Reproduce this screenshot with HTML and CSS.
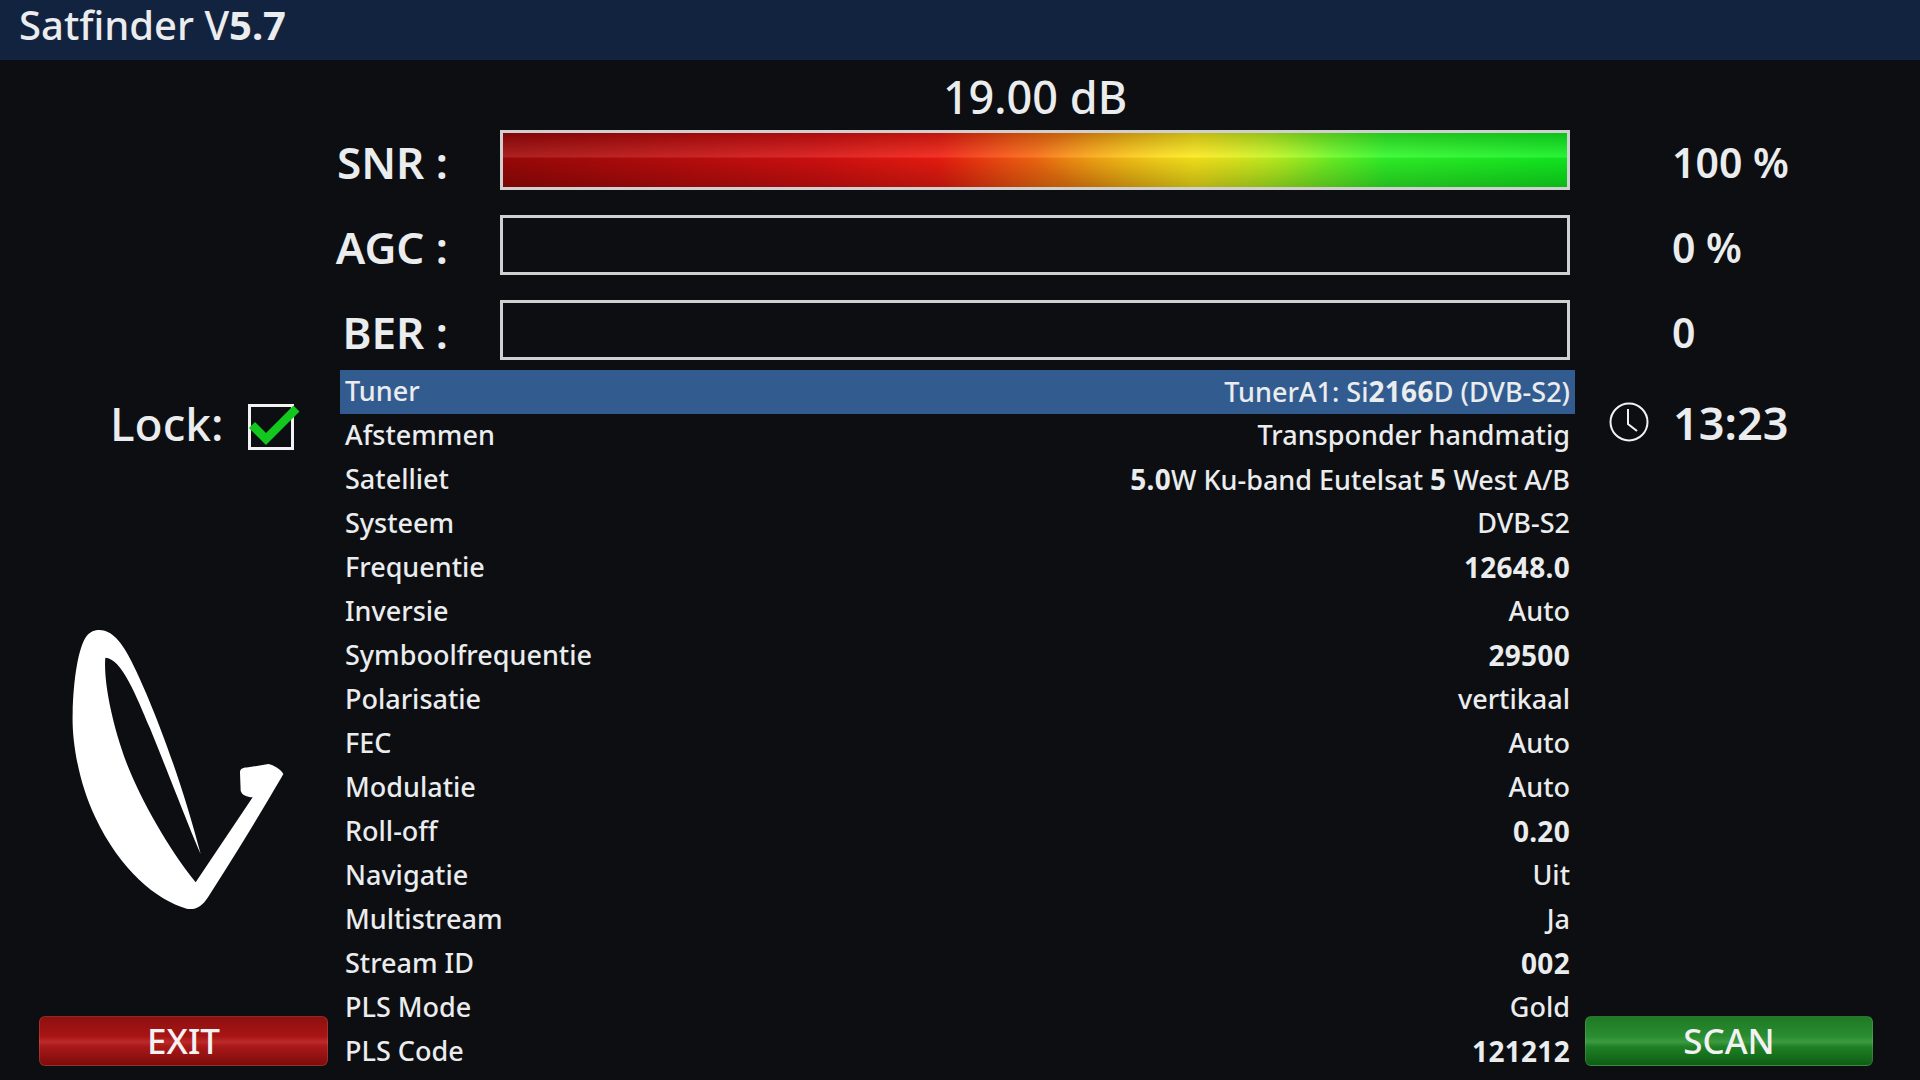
FILE: index.html
```html
<!DOCTYPE html>
<html lang="nl">
<head>
<meta charset="utf-8">
<title>Satfinder</title>
<link rel="stylesheet" href="styles.css">
</head>
<body>
<header class="titlebar">Satfinder V<b class="num">5.7</b></header>
<div class="db">19.00 dB</div>
<section class="meters">
  <div class="meter-label">SNR :</div><div class="bar bar-full"></div><div class="meter-value">100 %</div>
  <div class="meter-label">AGC :</div><div class="bar"></div><div class="meter-value">0 %</div>
  <div class="meter-label">BER :</div><div class="bar"></div><div class="meter-value">0</div>
</section>
<main class="lower">
  <aside class="left">
    <div class="lock">
      <span class="lock-text">Lock:</span>
      <svg class="check" viewBox="0 0 52 46" width="52" height="46"><rect x="1.5" y="1.5" width="43" height="43" fill="none" stroke="#f2f2f2" stroke-width="3"/><path d="M4 21 L18 35 L48.5 4.5" fill="none" stroke="#12c81e" stroke-width="8.5"/></svg>
    </div>
    <svg class="dish" viewBox="0 0 840 1020" width="280" height="340"><path fill="#fff" fill-rule="evenodd" d="M178 90 C215 90 245 125 275 185 C335 305 420 525 482 762 C450 690 385 520 330 385 C290 290 245 175 196 173 C190 240 215 370 260 490 C305 605 385 745 467 847 L638 592 C620 590 606 586 602 572 L600 518 C600 505 610 503 625 502 L685 492 C700 494 725 510 730 522 C680 610 570 790 505 890 C485 922 465 930 440 926 C350 900 240 810 165 650 C115 545 95 420 98 340 C100 240 115 140 140 108 C150 95 165 90 178 90 Z"/></svg>
    <button class="btn btn-exit">EXIT</button>
  </aside>
  <div class="list">
    <div class="row row-active"><span>Tuner</span><span>TunerA1: Si<b class="num">2166</b>D (DVB-S2)</span></div>
    <div class="row"><span>Afstemmen</span><span>Transponder handmatig</span></div>
    <div class="row"><span>Satelliet</span><span><b class="num">5.0</b>W Ku-band Eutelsat <b class="num">5</b> West A/B</span></div>
    <div class="row"><span>Systeem</span><span>DVB-S2</span></div>
    <div class="row"><span>Frequentie</span><b class="num">12648.0</b></div>
    <div class="row"><span>Inversie</span><span>Auto</span></div>
    <div class="row"><span>Symboolfrequentie</span><b class="num">29500</b></div>
    <div class="row"><span>Polarisatie</span><span>vertikaal</span></div>
    <div class="row"><span>FEC</span><span>Auto</span></div>
    <div class="row"><span>Modulatie</span><span>Auto</span></div>
    <div class="row"><span>Roll-off</span><b class="num">0.20</b></div>
    <div class="row"><span>Navigatie</span><span>Uit</span></div>
    <div class="row"><span>Multistream</span><span>Ja</span></div>
    <div class="row"><span>Stream ID</span><b class="num">002</b></div>
    <div class="row"><span>PLS Mode</span><span>Gold</span></div>
    <div class="row"><span>PLS Code</span><b class="num">121212</b></div>
  </div>
  <aside class="right">
    <div class="clock">
      <svg class="clock-icon" viewBox="0 0 40 40" width="40" height="40"><circle cx="20" cy="20" r="18.5" fill="none" stroke="#f2f2f2" stroke-width="2"/><path d="M19 7 V22 L28 29" fill="none" stroke="#f2f2f2" stroke-width="2"/></svg>
      <span>13:23</span>
    </div>
    <button class="btn btn-scan">SCAN</button>
  </aside>
</main>
</body>
</html>
```
FILE: styles.css
```css
html, body { margin: 0; padding: 0; }
body {
  width: 1920px;
  height: 1080px;
  overflow: hidden;
  background: #0c0e11;
  color: #eaecee;
  font-family: "Noto Sans", sans-serif;
  font-weight: 500;
}
.num { font-weight: 700; font-size: 28px; letter-spacing: .3px; }
.titlebar {
  height: 60px;
  box-sizing: border-box;
  padding-left: 19px;
  background: #12233f;
  font-size: 40px;
  line-height: 50px;
}
.titlebar .num { font-size: 40px; letter-spacing: 0; }
.db {
  height: 70px;
  box-sizing: border-box;
  padding: 9px 0 0 500px;
  width: 1570px;
  font-size: 45px;
  line-height: 56px;
  text-align: center;
}
.meters {
  display: grid;
  grid-template-columns: 448px 1070px 1fr;
  column-gap: 52px;
  grid-auto-rows: 60px;
  row-gap: 25px;
  align-items: center;
}
.meter-label { font-size: 44px; font-weight: 600; text-align: right; white-space: nowrap; padding-top: 4px; }
.meter-value { font-size: 41px; font-weight: 600; padding: 4px 0 0 50px; }
.bar {
  height: 60px;
  box-sizing: border-box;
  border: 3px solid #d0d0d0;
  background: #0c0e11;
}
.bar-full {
  background:
    linear-gradient(to bottom, rgba(0,0,0,.2) 0, rgba(255,255,255,.1) 44%, rgba(0,0,0,.06) 47%, rgba(0,0,0,.24) 100%),
    radial-gradient(ellipse 14% 70% at 64% 44%, rgba(255,232,30,.55), rgba(255,200,20,0)),
    linear-gradient(to right, #a00808 0, #d81010 30%, #f01c10 41%, #f85810 48%, #f8a010 57%, #f8e818 65%, #b0f820 72%, #30f828 83%, #10f020 100%);
}
.lower {
  display: grid;
  grid-template-columns: 340px 1235px 1fr;
  margin-top: 10px;
}
.left, .right { display: flex; flex-direction: column; height: 704px; box-sizing: border-box; }
.left { padding: 34px 0 8px 39px; }
.right { padding: 32px 47px 8px 10px; }
.lock { display: flex; align-items: center; gap: 25px; margin-left: 71px; font-size: 46px; height: 46px; }
.lock-text { margin-top: -8px; }
.check { flex: none; }
.dish { margin: 150px 0 0 1px; display: block; }
.left .btn { margin-top: auto; width: 289px; }
.right .btn { margin-top: auto; width: 288px; }
.btn {
  height: 50px;
  border: 1px solid rgba(255,255,255,.12);
  border-radius: 6px;
  color: #f2f2f2;
  font: 500 35px/46px "Noto Sans", sans-serif;
  padding: 0;
}
.btn-exit {
  background: linear-gradient(to bottom, #8e1010 0, #a81414 40%, #bc2a2a 52%, #a81818 62%, #7e0c0c 100%);
}
.btn-scan {
  background: linear-gradient(to bottom, #1e7a24 0, #2a8c30 40%, #3c9a40 52%, #1e8024 62%, #0e5e14 100%);
}
.clock { display: flex; align-items: center; gap: 24px; font-size: 45px; font-weight: 600; height: 40px; margin-left: 24px; }
.clock-icon { flex: none; }
.row {
  display: flex;
  justify-content: space-between;
  align-items: center;
  height: 44px;
  box-sizing: border-box;
  padding: 0 5px 3px;
  font-size: 27px;
  white-space: nowrap;
}
.row-active { background: #325c90; }
```
